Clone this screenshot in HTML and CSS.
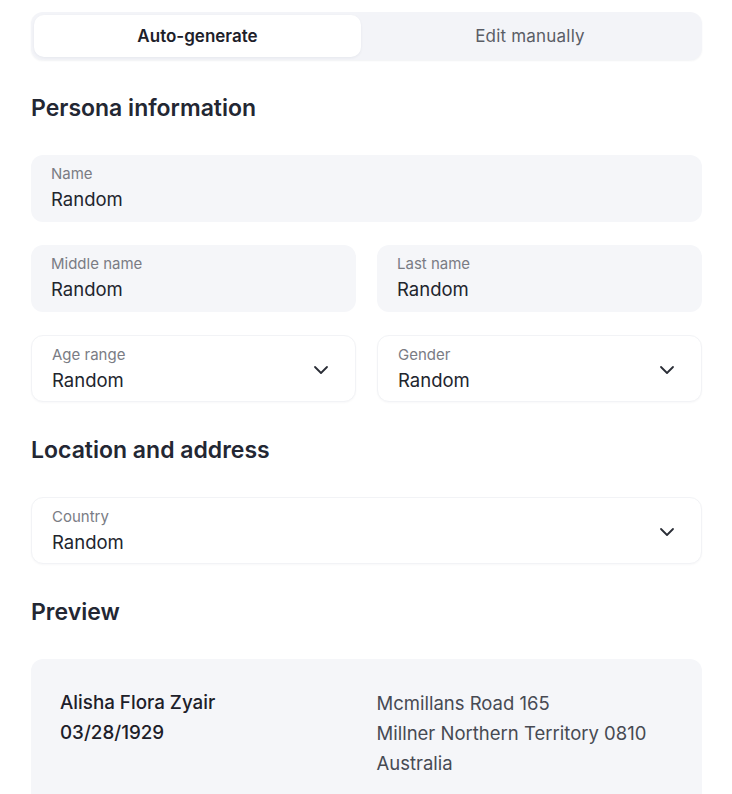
FILE: index.html
```html
<!DOCTYPE html>
<html>
<head>
<meta charset="utf-8">
<link rel="stylesheet" href="styles.css">
</head>
<body>
<div class="page">
  <div class="segmented">
    <div class="seg active">Auto-generate</div>
    <div class="seg">Edit manually</div>
  </div>

  <h2 class="heading h-persona">Persona information</h2>

  <div class="field filled full">
    <div class="label">Name</div>
    <div class="value">Random</div>
  </div>

  <div class="row">
    <div class="field filled">
      <div class="label">Middle name</div>
      <div class="value">Random</div>
    </div>
    <div class="field filled">
      <div class="label">Last name</div>
      <div class="value">Random</div>
    </div>
  </div>

  <div class="row">
    <div class="field select">
      <div class="texts">
        <div class="label">Age range</div>
        <div class="value">Random</div>
      </div>
      <svg class="chev" width="16" height="10" viewBox="0 0 16 10"><path d="M2 2 L8 8 L14 2" fill="none" stroke="#2a2d36" stroke-width="1.8" stroke-linecap="round" stroke-linejoin="round"/></svg>
    </div>
    <div class="field select">
      <div class="texts">
        <div class="label">Gender</div>
        <div class="value">Random</div>
      </div>
      <svg class="chev" width="16" height="10" viewBox="0 0 16 10"><path d="M2 2 L8 8 L14 2" fill="none" stroke="#2a2d36" stroke-width="1.8" stroke-linecap="round" stroke-linejoin="round"/></svg>
    </div>
  </div>

  <h2 class="heading h-location">Location and address</h2>

  <div class="field select full">
    <div class="texts">
      <div class="label">Country</div>
      <div class="value">Random</div>
    </div>
    <svg class="chev" width="16" height="10" viewBox="0 0 16 10"><path d="M2 2 L8 8 L14 2" fill="none" stroke="#2a2d36" stroke-width="1.8" stroke-linecap="round" stroke-linejoin="round"/></svg>
  </div>

  <h2 class="heading h-preview">Preview</h2>

  <div class="preview">
    <div class="pcol strong">
      <div>Alisha Flora Zyair</div>
      <div>03/28/1929</div>
    </div>
    <div class="pcol">
      <div>Mcmillans Road 165</div>
      <div>Millner Northern Territory 0810</div>
      <div>Australia</div>
    </div>
  </div>
</div>
</body>
</html>
```

FILE: styles.css
```css
* { box-sizing: border-box; }
html, body { margin: 0; padding: 0; background: #ffffff; }
body {
  font-family: Inter, "Noto Sans", sans-serif;
  color: #22252d;
  overflow: hidden;
  height: 794px;
}
.page {
  padding: 12px 30px 0 31px;
}
.segmented {
  display: flex;
  height: 48px;
  padding: 3px;
  background: #f3f4f8;
  border-radius: 12px;
  box-shadow: 0 1px 2px rgba(20, 30, 60, 0.06);
}
.seg {
  flex: 1 1 0;
  display: flex;
  align-items: center;
  justify-content: center;
  font-size: 17px;
  color: #5a5d66;
  border-radius: 10px;
  letter-spacing: 0.2px;
}
.seg.active {
  flex: 0 0 327px;
  background: #ffffff;
  color: #1d2029;
  font-weight: 600;
  letter-spacing: 0;
  box-shadow: 0 1px 3px rgba(20, 30, 60, 0.06);
}
.heading {
  margin: 0;
  font-size: 23px;
  font-weight: 600;
  color: #232733;
  line-height: 28px;
}
.h-persona { margin-top: 34px; margin-bottom: 33px; }
.h-location { margin-top: 34px; margin-bottom: 33px; }
.h-preview { margin-top: 34px; margin-bottom: 33px; }
.row {
  display: grid;
  grid-template-columns: 1fr 1fr;
  gap: 21px;
  margin-top: 23px;
}
.field {
  height: 67px;
  border-radius: 12px;
  padding: 10px 20px 0 20px;
}
.field.filled {
  background: #f5f6f9;
}
.field.select {
  background: #ffffff;
  border: 1px solid #f2f3f6;
  box-shadow: 0 1px 2px rgba(20, 30, 60, 0.03);
  display: flex;
  align-items: center;
  justify-content: space-between;
  padding: 0 26px 0 20px;
}
.label {
  font-size: 15px;
  color: #7a7c84;
  line-height: 18px;
}
.value {
  font-size: 18.5px;
  color: #22252d;
  line-height: 26px;
  margin-top: 3px;
}
.select .texts { padding-top: 1px; }
.chev { display: block; margin-top: 2px; }
.preview {
  background: #f5f6f9;
  border-radius: 12px;
  display: grid;
  grid-template-columns: 1fr 1fr;
  gap: 21px;
  padding: 29px 30px 40px 29px;
  height: 160px;
}
.pcol {
  font-size: 18.5px;
  line-height: 30px;
  color: #474a53;
}
.pcol.strong {
  color: #1d2029;
  font-weight: 500;
  font-size: 18.8px;
}
```
